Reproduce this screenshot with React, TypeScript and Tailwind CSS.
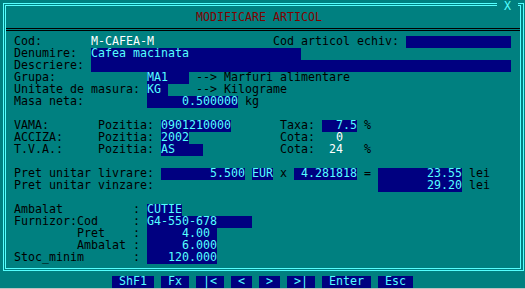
import React from 'react';

type Kind = 'l' | 'f' | 'w' | 't';
type Seg = [number, string, Kind?];

const kindClass: Record<Kind, string> = {
  l: 'text-black',
  f: 'bg-[#000080] text-[#55ffff]',
  w: 'text-white',
  t: 'text-[#800000]',
};

// one text row of the form, columns are 7px wide
const Line = ({ segs = [] }: { segs?: Seg[] }) => {
  let pos = 0;
  const out: React.ReactNode[] = [];
  segs.forEach(([col, text, kind = 'l'], i) => {
    if (col > pos) out.push(' '.repeat(col - pos));
    out.push(
      <span key={i} className={`inline-block align-top h-[12px] leading-[10px] ${kindClass[kind]}`}>
        {text}
      </span>
    );
    pos = col + text.length;
  });
  return <div className="h-[12px] leading-[12px] whitespace-pre pl-[8px]">{out}</div>;
};

const rows: Seg[][] = [
  [[26, 'MODIFICARE ARTICOL', 't']],
  [],
  [[0, 'Cod:'], [11, 'M-CAFEA-M', 'w'], [37, 'Cod articol echiv:'], [56, ' '.repeat(15), 'f']],
  [[0, 'Denumire:'], [11, 'Cafea macinata'.padEnd(30), 'f']],
  [[0, 'Descriere:'], [11, ' '.repeat(60), 'f']],
  [[0, 'Grupa:'], [19, 'MA1   ', 'f'], [26, '--> Marfuri alimentare']],
  [[0, 'Unitate de masura:'], [19, 'KG ', 'f'], [26, '--> Kilograme']],
  [[0, 'Masa neta:'], [19, '0.500000'.padStart(13), 'f'], [33, 'kg']],
  [],
  [[0, 'VAMA:'], [12, 'Pozitia:'], [21, '0901210000', 'f'], [38, 'Taxa:'], [44, '  7.5', 'f'], [50, '%']],
  [[0, 'ACCIZA:'], [12, 'Pozitia:'], [21, '2002', 'f'], [38, 'Cota:'], [46, '0', 'w']],
  [[0, 'T.V.A.:'], [12, 'Pozitia:'], [21, 'AS    ', 'f'], [38, 'Cota:'], [45, '24', 'w'], [50, '%']],
  [],
  [
    [0, 'Pret unitar livrare:'],
    [21, '5.500'.padStart(12), 'f'],
    [34, 'EUR', 'f'],
    [38, 'x'],
    [40, ' 4.281818', 'f'],
    [50, '='],
    [52, '23.55'.padStart(12), 'f'],
    [65, 'lei'],
  ],
  [[0, 'Pret unitar vinzare:'], [52, '29.20'.padStart(12), 'f'], [65, 'lei']],
  [],
  [[0, 'Ambalat'], [17, ':'], [19, 'CUTIE', 'f']],
  [[0, 'Furnizor:Cod'], [17, ':'], [19, 'G4-550-678'.padEnd(15), 'f']],
  [[9, 'Pret'], [17, ':'], [19, '     4.00 ', 'f']],
  [[9, 'Ambalat'], [17, ':'], [19, '     6.000', 'f']],
  [[0, 'Stoc_minim'], [17, ':'], [19, '   120.000', 'f']],
];

const keys = ['ShF1', 'Fx', '|<', '<', '>', '>|', 'Enter', 'Esc'];

const App = () => {
  return (
    <div
      className="relative w-[525px] h-[289px] overflow-hidden bg-[#008080] text-[11.63px] text-black"
      style={{ fontFamily: '"DejaVu Sans Mono", "Liberation Mono", monospace' }}
    >
      <div className="ml-[3px] pt-[3px]">
        <div className="w-[521px] h-[268px] border border-[#55ffff]">
          <div className="ml-[1px] mt-[1px] w-[516px] h-[264px] border border-[#55ffff] pt-[6px]">
            {rows.map((segs, i) =>
              i === 1 ? (
                <div key={i} className="h-[12px] pt-[4px]">
                  <div className="h-[1px] bg-black" />
                  <div className="h-[1px] mt-[1px] bg-black" />
                </div>
              ) : (
                <Line key={i} segs={segs} />
              )
            )}
          </div>
        </div>
      </div>

      {/* close mark sitting on the top border */}
      <div className="absolute left-[497px] top-0 w-[21px] h-[12px] leading-[12px] bg-[#008080] pl-[7px] text-[#55ffff]">
        X
      </div>

      <div className="mt-[5px] h-[12px] pl-[112px] flex gap-[7px] whitespace-pre">
        {keys.map((k) => (
          <span key={k} className="h-[12px] leading-[10px] px-[7px] bg-[#000080] text-[#55ffff]">
            {k}
          </span>
        ))}
      </div>
      <div className="h-[1px] bg-[#c0c0c0]" />
    </div>
  );
};

export default App;
